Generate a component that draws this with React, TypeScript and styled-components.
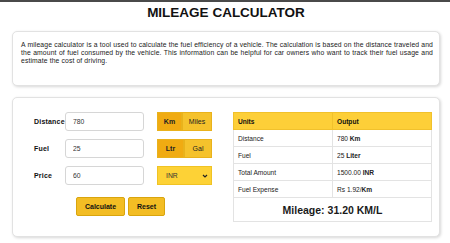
import React from 'react'
import styled, { createGlobalStyle } from 'styled-components'

const GlobalStyle = createGlobalStyle`
  html, body {
    margin: 0;
    padding: 0;
    background: #ffffff;
    font-family: "Liberation Sans", Arial, sans-serif;
    color: #111;
  }
`

const Page = styled.main`
  border-top: 2px solid #4a4a4a;
  padding: 0 10px 10px 12px;
`

const Title = styled.h1`
  margin: 0;
  padding-top: 3px;
  height: 23px;
  text-align: center;
  font-size: 13.5px;
  font-weight: 700;
`

const Card = styled.section<{ $pad: string; $mt: number }>`
  margin-top: ${({ $mt }) => $mt}px;
  padding: ${({ $pad }) => $pad};
  border: 1px solid #e2e2e2;
  border-radius: 5px;
  box-shadow: 1px 1px 3px rgba(0, 0, 0, 0.16);
  background: #fff;
`

const Intro = styled.p`
  margin: 0;
  font-size: 6.8px;
  letter-spacing: 0.12px;
  line-height: 8px;
  text-align: justify;
  color: #222;
`

const Columns = styled.div`
  display: flex;
  justify-content: space-between;
  align-items: flex-start;
`

const Form = styled.div`
  width: 178px;
  display: flex;
  flex-direction: column;
  gap: 8px;
`

const Row = styled.div`
  display: flex;
  align-items: center;
  height: 19px;
`

const Label = styled.label`
  width: 31px;
  font-size: 7px;
  font-weight: 700;
  letter-spacing: 0.2px;
`

const TextInput = styled.input`
  box-sizing: border-box;
  width: 79px;
  height: 19px;
  margin-right: 13px;
  padding: 0 7px;
  border: 1px solid #d6d6d6;
  border-radius: 3px;
  font-family: inherit;
  font-size: 6.8px;
  color: #333;
  outline: none;
`

const Toggle = styled.div`
  display: flex;
  width: 55px;
  height: 19px;
`

const Segment = styled.button<{ $active?: boolean; $w: number }>`
  width: ${({ $w }) => $w}px;
  height: 19px;
  padding: 0;
  border: 1px solid #e9b21c;
  background: ${({ $active }) => ($active ? '#f0ab12' : '#f5c22c')};
  font-family: inherit;
  font-size: 7px;
  font-weight: ${({ $active }) => ($active ? 700 : 400)};
  color: #222;
`

const Select = styled.div`
  box-sizing: border-box;
  width: 55px;
  height: 19px;
  display: flex;
  align-items: center;
  justify-content: space-between;
  padding: 0 3px 0 8px;
  background: #fdd236;
  border: 1px solid #f0c324;
  font-size: 6.8px;
  color: #333;
`

const Actions = styled.div`
  display: flex;
  justify-content: center;
  gap: 3px;
  margin-top: 4px;
  padding-right: 5px;
`

const ActionButton = styled.button<{ $w: number }>`
  width: ${({ $w }) => $w}px;
  height: 19px;
  padding: 0;
  border: 1px solid #d9a50e;
  border-radius: 2px;
  background: #f3bd24;
  font-family: inherit;
  font-size: 7px;
  font-weight: 700;
  color: #111;
`

const Table = styled.table`
  width: 199px;
  border-collapse: collapse;
  font-size: 6.6px;
`

const HeadCell = styled.th<{ $half?: boolean }>`
  width: ${({ $half }) => ($half ? '50%' : 'auto')};
  height: 16px;
  padding: 0 4px;
  text-align: left;
  font-weight: 700;
  background: #fdcf38;
  border: 1px solid #f1c12c;
`

const Cell = styled.td`
  height: 16px;
  padding: 0 4px;
  border: 1px solid #e3e3e3;
  color: #222;
  b {
    font-weight: 700;
  }
`

const MileageCell = styled.td`
  height: 21px;
  text-align: center;
  border: 1px solid #e3e3e3;
  font-size: 10.5px;
  font-weight: 700;
  color: #1a1a1a;
`

const rows = [
  ['Distance', '780 ', 'Km'],
  ['Fuel', '25 ', 'Liter'],
  ['Total Amount', '1500.00 ', 'INR'],
  ['Fuel Expense', 'Rs 1.92/', 'Km'],
]

const Chevron = () => (
  <svg width="6" height="4" viewBox="0 0 6 4">
    <path d="M1 1l2 2 2-2" fill="none" stroke="#222" strokeWidth="1.2" />
  </svg>
)

export default function App() {
  return (
    <>
      <GlobalStyle />
      <Page>
        <Title>MILEAGE CALCULATOR</Title>
        <Card $mt={3} $pad="9px 6px 20px 8px">
          <Intro>
            A mileage calculator is a tool used to calculate the fuel efficiency of a vehicle. The calculation is
            based on the distance traveled and the amount of fuel consumed by the vehicle. This information can be
            helpful for car owners who want to track their fuel usage and estimate the cost of driving.
          </Intro>
        </Card>
        <Card $mt={11} $pad="14px 7px 14px 21px">
          <Columns>
            <Form>
              <Row>
                <Label>Distance</Label>
                <TextInput defaultValue="780" />
                <Toggle>
                  <Segment $active $w={25}>Km</Segment>
                  <Segment $w={30}>Miles</Segment>
                </Toggle>
              </Row>
              <Row>
                <Label>Fuel</Label>
                <TextInput defaultValue="25" />
                <Toggle>
                  <Segment $active $w={27}>Ltr</Segment>
                  <Segment $w={28}>Gal</Segment>
                </Toggle>
              </Row>
              <Row>
                <Label>Price</Label>
                <TextInput defaultValue="60" />
                <Select>
                  <span>INR</span>
                  <Chevron />
                </Select>
              </Row>
              <Actions>
                <ActionButton $w={49}>Calculate</ActionButton>
                <ActionButton $w={37}>Reset</ActionButton>
              </Actions>
            </Form>
            <Table>
              <thead>
                <tr>
                  <HeadCell $half>Units</HeadCell>
                  <HeadCell>Output</HeadCell>
                </tr>
              </thead>
              <tbody>
                {rows.map(([name, value, unit]) => (
                  <tr key={name}>
                    <Cell>{name}</Cell>
                    <Cell>
                      {value}
                      <b>{unit}</b>
                    </Cell>
                  </tr>
                ))}
                <tr>
                  <MileageCell colSpan={2}>Mileage: 31.20 KM/L</MileageCell>
                </tr>
              </tbody>
            </Table>
          </Columns>
        </Card>
      </Page>
    </>
  )
}
